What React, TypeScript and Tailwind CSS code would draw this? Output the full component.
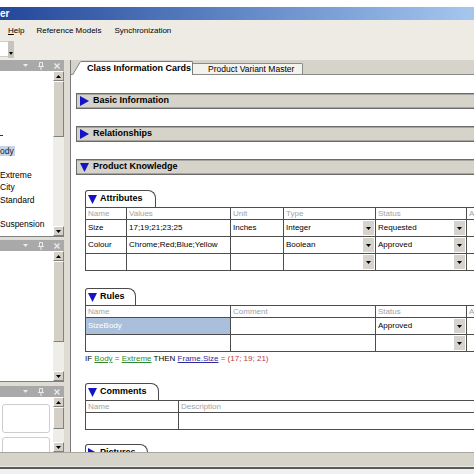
import React from "react";

type Cell = { text?: string; drop?: boolean; sel?: boolean };

const TriRight = () => (
  <svg width="9" height="10" viewBox="0 0 9 10" className="shrink-0">
    <path d="M0 0L9 5L0 10Z" fill="#1414c4" />
  </svg>
);

const TriDown = () => (
  <svg width="9" height="9" viewBox="0 0 9 9" className="shrink-0">
    <path d="M0 0L9 0L4.5 9Z" fill="#1414c4" />
  </svg>
);

const SmallArrow = ({ up = false }: { up?: boolean }) => (
  <svg width="5" height="3" viewBox="0 0 5 3">
    <path d={up ? "M0 3L5 3L2.5 0Z" : "M0 0L5 0L2.5 3Z"} fill="#000" />
  </svg>
);

const DropBtn = () => (
  <div className="flex h-[14px] w-[11px] shrink-0 items-center justify-center bg-[#d6d3cd]">
    <SmallArrow />
  </div>
);

const PanelHeader = () => (
  <div className="flex h-[11px] shrink-0 items-center justify-end gap-[10px] bg-[#a9a9a9] pr-[4px]">
    <svg width="5" height="3" viewBox="0 0 5 3">
      <path d="M0 0L5 0L2.5 3Z" fill="#ececec" />
    </svg>
    <svg width="6" height="8" viewBox="0 0 6 8">
      <path d="M1.5 0.5H4.5V4.5H1.5Z M0 4.5H6 M3 4.5V8" stroke="#ececec" fill="none" />
    </svg>
    <svg width="6" height="6" viewBox="0 0 6 6">
      <path d="M0.5 0.5L5.5 5.5M5.5 0.5L0.5 5.5" stroke="#ececec" strokeWidth="1.4" />
    </svg>
  </div>
);

const VScroll = ({ thumb }: { thumb: string }) => (
  <div className="flex w-[11px] shrink-0 flex-col bg-[#eeede7]">
    <div className="flex h-[10px] shrink-0 items-center justify-center border border-t-white border-l-white border-b-[#808080] border-r-[#808080] bg-[#d4d0c8]">
      <SmallArrow up />
    </div>
    <div className={`${thumb} shrink-0 border border-t-white border-l-white border-b-[#808080] border-r-[#808080] bg-[#d4d0c8]`} />
    <div className="flex-1" />
    <div className="flex h-[10px] shrink-0 items-center justify-center border border-t-white border-l-white border-b-[#808080] border-r-[#808080] bg-[#d4d0c8]">
      <SmallArrow />
    </div>
  </div>
);

const SectionBar = ({ title, open }: { title: string; open?: boolean }) => (
  <div className="flex h-[16px] shrink-0 items-center gap-[4px] border border-r-0 border-[#6b6b6b] bg-[#d6d3cb] pl-[3px] shadow-[inset_0_1px_0_#a8a59e,inset_0_-1px_0_#a8a59e]">
    {open ? <TriDown /> : <TriRight />}
    <span className="text-[9px] font-bold text-black">{title}</span>
  </div>
);

const CardTab = ({ title, w, open = true }: { title: string; w: string; open?: boolean }) => (
  <div
    className={`flex h-[17px] ${w} shrink-0 items-center gap-[3px] rounded-tl-[3px] rounded-tr-[8px] border border-b-0 border-[#4a4a4a] bg-white pl-[2px]`}
  >
    {open ? <TriDown /> : <TriRight />}
    <span className="text-[9px] font-bold text-black">{title}</span>
  </div>
);

const Grid = ({
  cols,
  head,
  rows,
}: {
  cols: string;
  head: string[];
  rows: Cell[][];
}) => (
  <div className={`grid w-[540px] border-l border-t border-[#4d4d4d] ${cols}`}>
    {head.map((h, i) => (
      <div
        key={"h" + i}
        className="flex h-[12px] items-center overflow-hidden border-b border-r border-[#4d4d4d] px-[2px] text-[8px] text-[#a3a3a3]"
      >
        {h}
      </div>
    ))}
    {rows.flatMap((r, ri) =>
      r.map((c, ci) => (
        <div
          key={ri + "-" + ci}
          className={`flex h-[17px] items-center justify-between border-b border-r border-[#4d4d4d] pl-[2px] pr-[1px] text-[8px] ${
            c.sel ? "bg-[#a9bfdc] text-white" : "text-black"
          }`}
        >
          <span>{c.text}</span>
          {c.drop && <DropBtn />}
        </div>
      ))
    )}
  </div>
);

export default function App() {
  return (
    <div className="flex h-[474px] w-[474px] flex-col overflow-hidden bg-white text-black [font-family:'Liberation_Sans',Arial,sans-serif]">
      {/* top strip + title bar */}
      <div className="h-[7px] shrink-0 bg-white" />
      <div className="flex h-[13px] shrink-0 items-center bg-gradient-to-r from-[#23479a] to-[#a5c7ef] text-[10px] font-bold text-white">
        er
      </div>

      {/* menu */}
      <div className="flex h-[20px] shrink-0 items-center bg-[#edebe4] pl-[8px] pt-[2px] text-[8px]">
        <span>
          <span className="underline">H</span>elp
        </span>
        <span className="ml-[12px]">Reference Models</span>
        <span className="ml-[13px]">Synchronization</span>
      </div>

      {/* toolbar */}
      <div className="flex h-[20px] shrink-0 items-start bg-[#edebe4] pt-[1px]">
        <div className="h-[16px] w-[8px] border-y border-[#cfcdc6] bg-white" />
        <div className="flex h-[17px] w-[6px] items-end justify-center bg-[#c6c4bc] pb-[3px]">
          <svg width="4" height="3" viewBox="0 0 4 3">
            <path d="M0 0L4 0L2 3Z" fill="#000" />
          </svg>
        </div>
      </div>

      {/* main */}
      <div className="flex min-h-0 flex-1">
        {/* left dock */}
        <div className="flex w-[64px] shrink-0 flex-col bg-[#dedcd4]">
          <PanelHeader />
          <div className="flex h-[166px] shrink-0 border-b border-[#808080] bg-white">
            <div className="flex flex-1 flex-col overflow-hidden text-[8.5px] leading-[12px]">
              <div className="mt-[58px] flex h-[12px] items-center">
                <div className="h-px w-[3px] bg-[#333]" />
              </div>
              <div className="mt-[4px] h-[12px]">
                <span className="bg-[#c6d4ea] pr-[1px] text-[#222]">ody</span>
              </div>
              <div className="mt-[12px] h-[12px]">Extreme</div>
              <div className="h-[12px]">City</div>
              <div className="mt-[1px] h-[12px]">Standard</div>
              <div className="mt-[12px] h-[12px]">Suspension</div>
            </div>
            <VScroll thumb="h-[56px]" />
          </div>
          <div className="h-[3px] shrink-0" />
          <PanelHeader />
          <div className="flex h-[131px] shrink-0 border-b border-[#808080] bg-white">
            <div className="flex-1" />
            <VScroll thumb="h-[81px]" />
          </div>
          <div className="h-[4px] shrink-0" />
          <PanelHeader />
          <div className="flex min-h-0 flex-1 bg-white">
            <div className="flex flex-1 flex-col overflow-hidden pl-[2px] pt-[7px]">
              <div className="h-[29px] w-[48px] shrink-0 rounded-[3px] border border-[#cdcdcd] bg-white" />
              <div className="mt-[4px] h-[20px] w-[48px] shrink-0 rounded-[3px] border border-[#cdcdcd] bg-white" />
            </div>
            <VScroll thumb="h-[22px]" />
          </div>
        </div>

        {/* splitter */}
        <div className="w-[6px] shrink-0 bg-[#dedcd4]" />

        {/* right document */}
        <div className="flex min-w-0 flex-1 flex-col border-l border-[#7a7a7a] bg-white">
          <div className="flex h-[15px] shrink-0 items-end border-b border-[#8a8a8a] bg-[#d6d3cb]">
            <div className="relative z-10 -mb-px ml-px flex h-[14px] w-[121px] shrink-0">
              <svg width="9" height="14" viewBox="0 0 9 14" className="shrink-0">
                <path d="M0 14L8 0.5H9V14Z" fill="#fff" />
                <path d="M0.5 14L8.5 0.5" stroke="#7a7a7a" />
              </svg>
              <div className="flex flex-1 items-center rounded-tr-[2px] border-r border-t border-[#7a7a7a] bg-white pl-[6px] text-[9px] font-bold">
                Class Information Cards
              </div>
            </div>
            <div className="flex h-[11px] w-[110px] shrink-0 items-center rounded-tr-[2px] border-r border-t border-[#8a8a8a] bg-[#f3f2ec] pl-[15px] text-[8.5px]">
              Product Variant Master
            </div>
          </div>

          <div className="flex min-h-0 flex-1 flex-col overflow-hidden pl-[5px]">
            <div className="mt-[18px]">
              <SectionBar title="Basic Information" />
            </div>
            <div className="mt-[17px]">
              <SectionBar title="Relationships" />
            </div>
            <div className="mt-[17px]">
              <SectionBar title="Product Knowledge" open />
            </div>

            <div className="ml-[9px] flex flex-col">
              {/* Attributes */}
              <div className="mt-[15px]">
                <CardTab title="Attributes" w="w-[71px]" />
              </div>
              <Grid
                cols="grid-cols-[41px_104px_53px_92px_91px_159px]"
                head={["Name", "Values", "Unit", "Type", "Status", "A"]}
                rows={[
                  [
                    { text: "Size" },
                    { text: "17;19;21;23;25" },
                    { text: "Inches" },
                    { text: "Integer", drop: true },
                    { text: "Requested", drop: true },
                    {},
                  ],
                  [
                    { text: "Colour" },
                    { text: "Chrome;Red;Blue;Yellow" },
                    {},
                    { text: "Boolean", drop: true },
                    { text: "Approved", drop: true },
                    {},
                  ],
                  [{}, {}, {}, { drop: true }, { drop: true }, {}],
                ]}
              />

              {/* Rules */}
              <div className="mt-[17px]">
                <CardTab title="Rules" w="w-[51px]" />
              </div>
              <Grid
                cols="grid-cols-[145px_145px_91px_159px]"
                head={["Name", "Comment", "Status", "A"]}
                rows={[
                  [{ text: "SizeBody", sel: true }, {}, { text: "Approved", drop: true }, {}],
                  [{}, {}, { drop: true }, {}],
                ]}
              />
              <div className="mt-px flex h-[12px] items-center whitespace-pre text-[8px]">
                <span>IF </span>
                <span className="text-[#2f8a2f] underline">Body</span>
                <span className="text-[#555]"> = </span>
                <span className="text-[#2f8a2f] underline">Extreme</span>
                <span> THEN </span>
                <span className="text-[#2b2ba6] underline">Frame.Size</span>
                <span className="text-[#c03a3a]"> = (17; 19; 21)</span>
              </div>

              {/* Comments */}
              <div className="mt-[18px]">
                <CardTab title="Comments" w="w-[74px]" />
              </div>
              <Grid
                cols="grid-cols-[93px_447px]"
                head={["Name", "Description"]}
                rows={[[{}, {}]]}
              />

              {/* Pictures */}
              <div className="mt-[14px]">
                <CardTab title="Pictures" w="w-[63px]" open={false} />
              </div>
            </div>
          </div>
        </div>
      </div>

      {/* status bar */}
      <div className="h-[14px] shrink-0 border-t border-[#a9a6a0] bg-[#d6d3cb]" />
      <div className="h-px shrink-0 bg-[#ebe9e3]" />
      <div className="h-[2px] shrink-0 bg-[#5a5a5a]" />
      <div className="h-[5px] shrink-0 bg-[#f0f0f0]" />
    </div>
  );
}
